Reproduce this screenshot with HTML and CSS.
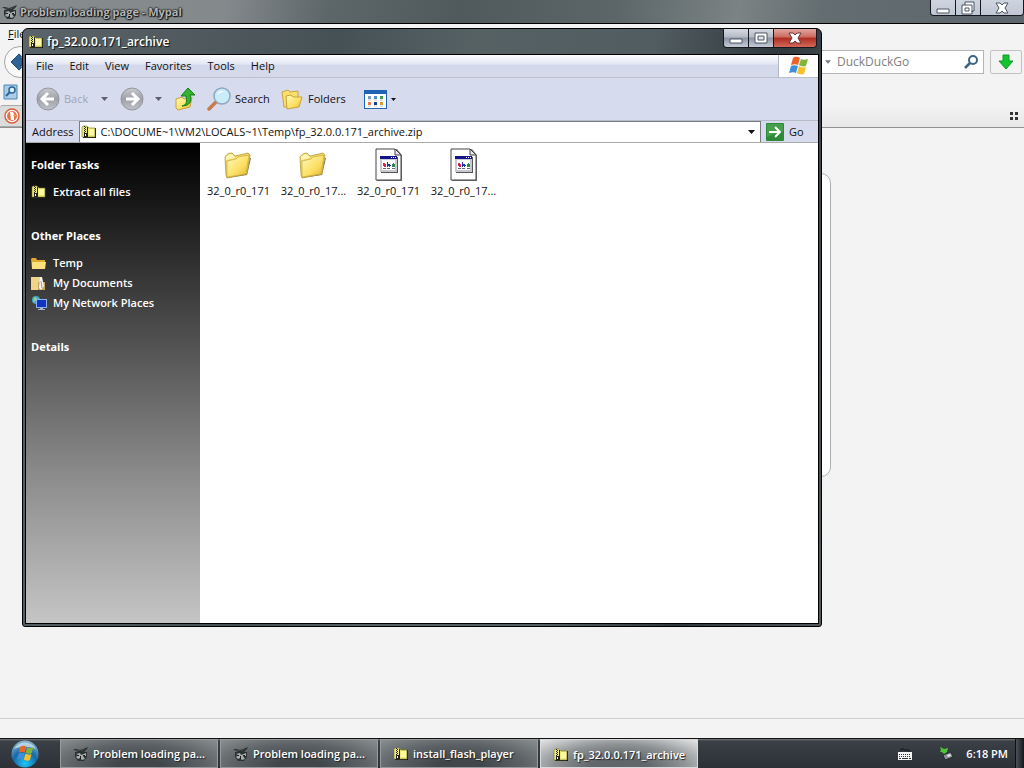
FILE: index.html
```html
<!DOCTYPE html>
<html lang="en">
<head>
    <meta charset="UTF-8">
    <meta name="viewport" content="width=device-width, initial-scale=1.0">
    <title>Desktop</title>
    <link rel="stylesheet" href="styles.css">
</head>
<body>
    <!-- Shared icons -->
    <svg class="sprite" aria-hidden="true">
        <defs>
            <linearGradient id="folder-fill" x1="0" y1="0" x2="1" y2="1">
                <stop offset="0" stop-color="#fffbc0"/>
                <stop offset="0.6" stop-color="#fbdf62"/>
                <stop offset="1" stop-color="#e2b02c"/>
            </linearGradient>
            <linearGradient id="grey-ball" x1="0" y1="0" x2="0" y2="1">
                <stop offset="0" stop-color="#c9cad0"/>
                <stop offset="0.5" stop-color="#9fa1a8"/>
                <stop offset="1" stop-color="#c0c2ca"/>
            </linearGradient>
            <radialGradient id="start-fill" cx="0.5" cy="0.85" r="0.9">
                <stop offset="0" stop-color="#1fc6f5"/>
                <stop offset="0.5" stop-color="#1569a8"/>
                <stop offset="1" stop-color="#9fc4d8"/>
            </radialGradient>
        </defs>
        <symbol id="zip" viewBox="0 0 16 16">
            <path d="M2 14h13V4h-1v9H2z" fill="#111"/>
            <path d="M1 3l1-1h4l2 2h6v9H1z" fill="#eeea78" stroke="#77732c" stroke-width="0.6"/>
            <path d="M8 5h5v6H8z" fill="#fbf9a8"/>
            <path d="M3 2h1v1H3zM4 3h1v1H4zM3 4h1v1H3zM4 5h1v1H4zM3 6h1v1H3zM4 7h1v1H4zM3 8h1v1H3zM3 9h3v4H3zM6 3h1v10H6z" fill="#222"/>
            <path d="M4 10h1v2H4z" fill="#fff"/>
        </symbol>
        <symbol id="mypal" viewBox="0 0 16 16">
            <path d="M0 3l3 0 4 1 3-1 5-2-1 2-3 3 3 0 0 5-3 4H5l-3-4V6l3 0z" fill="#2b3233"/>
            <path d="M3 8l4-1 1 2 5-2v3l-3 0 2 3-3 1-2-2-2 1-2-2 2-2z" fill="#a4afab"/>
            <path d="M4 9h2v1H4zM10 9h2v1h-2zM7 10h1v3H7z" fill="#1d2223"/>
            <path d="M2 4l6 1 4-2-3 2H6z" fill="#78837f"/>
        </symbol>
        <symbol id="flag" viewBox="0 0 20 20">
            <path d="M4 2c3-2 5-1 7 0L9 9C7 8 5 8 2 9z" fill="#e8642a"/>
            <path d="M12 3c2 1 4 1 7 0l-2 7c-3 1-5 0-7-1z" fill="#7fb63a"/>
            <path d="M2 10c2-1 4-1 7 0l-2 7c-2-1-4-1-7 0z" fill="#3f8fd8"/>
            <path d="M10 10c2 1 4 2 7 1l-2 7c-3 1-5 0-7-1z" fill="#f7bf2e"/>
        </symbol>
        <symbol id="folder" viewBox="0 0 32 32">
            <path d="M4 30l20-3 4-17-1 0-4 16-19 3z" fill="#6f6c5c"/>
            <path d="M2 9c2-3 4-4 7-4l3 3 13-3 2 2-3 19-20 4-1-3z" fill="#f3d868" stroke="#b39a3c" stroke-width="0.8"/>
            <path d="M3 9c2-2 4-3 6-3l3 4-9 2z" fill="#fff7b8"/>
            <path d="M4 13l9-2 2-2 11-2-3 19-19 3z" fill="url(#folder-fill)" stroke="#c39c2c" stroke-width="0.6"/>
        </symbol>
        <symbol id="dll" viewBox="0 0 32 34">
            <path d="M4 2h20l5 6v26H4z" fill="#777"/>
            <path d="M3 2h19l6 6v25H3z" fill="#fff" stroke="#444" stroke-width="1"/>
            <path d="M22 2v6h6z" fill="#e8e8e8" stroke="#444" stroke-width="1"/>
            <path d="M8 10h17v16H8z" fill="#555"/>
            <path d="M7 9h17v16H7z" fill="#c9c9d1"/>
            <path d="M7 9h17v3H7z" fill="#12128a"/>
            <path d="M18 10h1v1h-1zM20 10h1v1h-1zM22 10h1v1h-1z" fill="#fff"/>
            <path d="M9 13h13v10H9z" fill="#fff"/>
            <path d="M10 16h2v1h1v3h-2v-1h-1z" fill="#d2274b"/>
            <path d="M14 15h1v2h2v1h1v1h-1v1h-1v-1h-1v1h-1z" fill="#1b35a8"/>
            <path d="M20 16h1v1h1v3h-3v-3h1z" fill="#238a52"/>
            <path d="M10 21h3v1h-3zM14 21h3v1h-3zM19 21h3v1h-3z" fill="#667"/>
        </symbol>
        <symbol id="caret" viewBox="0 0 7 4">
            <path d="M0 0h7L3.500 4z" fill="currentColor"/>
        </symbol>
    </svg>

    <div class="desktop">
        <main class="browser">
            <header class="browser-title">
                <svg class="icon"><use href="#mypal"/></svg>
                <span>Problem loading page - Mypal</span>
                <div class="window-buttons browser-buttons">
                    <button type="button" aria-label="Minimize"><svg viewBox="0 0 14 14"><path d="M1 8h12v4H1z" fill="#fff" stroke="#4c5463"/></svg></button>
                    <button type="button" aria-label="Restore"><svg viewBox="0 0 14 14"><path d="M4 1h9v9h-2v3H1V4h3z" fill="#fff" stroke="#4c5463"/><path d="M4 4h7v7M4 7h4v3H4z" fill="none" stroke="#4c5463"/></svg></button>
                    <button type="button" class="close-button" aria-label="Close"><svg viewBox="0 0 14 14"><path d="M1 2h4l2 2 2-2h4l-3 5 3 5H9l-2-2-2 2H1l3-5z" fill="#fff" stroke="#4c5463"/></svg></button>
                </div>
            </header>

            <div class="browser-menu"><button type="button"><u>F</u>ile</button></div>

            <div class="browser-nav">
                <button type="button" class="round-back" aria-label="Back">
                    <svg viewBox="0 0 20 20"><path d="M9 1l3 3-2 2h8v8h-8l2 2-3 3-9-9z" fill="#2e6396" stroke="#173f6a"/></svg>
                </button>
                <div class="search-box">
                    <svg class="caret"><use href="#caret"/></svg>
                    <input type="text" placeholder="DuckDuckGo" aria-label="Search the web">
                    <svg class="lens" viewBox="0 0 14 14"><circle cx="9" cy="5" r="4" fill="none" stroke="#3d6387" stroke-width="2"/><path d="M6 8l-5 5" stroke="#3d6387" stroke-width="2.500"/></svg>
                </div>
                <button type="button" class="download" aria-label="Downloads">
                    <svg viewBox="0 0 16 16"><path d="M5 1h6v6h4l-7 8-7-8h4z" fill="#13c52c" stroke="#14962a"/></svg>
                </button>
            </div>

            <div class="bookmark-bar">
                <svg class="icon" viewBox="0 0 16 16"><path d="M1 1h13v14H1z" fill="#a9cde9" stroke="#4d86b5"/><circle cx="9" cy="6" r="3" fill="#dff0fb" stroke="#2b6597" stroke-width="1.500"/><path d="M7 8l-4 4" stroke="#2b6597" stroke-width="2"/></svg>
            </div>

            <div class="tab-bar">
                <div class="tab">
                    <svg class="icon" viewBox="0 0 16 16"><circle cx="8" cy="8" r="7" fill="#fff" stroke="#d9603b" stroke-width="1.500"/><circle cx="8" cy="8" r="5" fill="#e5714b"/><path d="M6 4c3-1 4 1 4 3v5H7z" fill="#fff"/><path d="M9 7h3v1H9z" fill="#f6b32c"/></svg>
                </div>
                <svg class="grid-dots" viewBox="0 0 8 8"><path d="M0 0h3v3H0zM5 0h3v3H5zM0 5h3v3H0zM5 5h3v3H5z" fill="#333"/></svg>
            </div>

            <div class="page">
                <div class="error-card"></div>
            </div>
            <div class="status-bar"></div>
        </main>

        <footer class="taskbar">
            <button type="button" class="start" aria-label="Start">
                <svg viewBox="0 0 28 28">
                    <circle cx="14" cy="14" r="13.500" fill="url(#start-fill)"/>
                    <path d="M3 9a12.500 12.500 0 0 1 22 0C18 6 10 6 3 9z" fill="#d7e8ef" opacity="0.7"/>
                    <use href="#flag" x="6" y="5" width="17" height="17"/>
                </svg>
            </button>
            <button type="button" class="task"><svg class="icon"><use href="#mypal"/></svg><span>Problem loading pa...</span></button>
            <button type="button" class="task"><svg class="icon"><use href="#mypal"/></svg><span>Problem loading pa...</span></button>
            <button type="button" class="task"><svg class="icon"><use href="#zip"/></svg><span>install_flash_player</span></button>
            <button type="button" class="task active"><svg class="icon"><use href="#zip"/></svg><span>fp_32.0.0.171_archive</span></button>
            <div class="tray">
                <svg class="icon" viewBox="0 0 16 16"><path d="M4 5V3h3v1h5v2" fill="none" stroke="#15181c"/><path d="M1 6h14v8H1z" fill="#f4f4f4"/><path d="M2 8.500h12M2 10.500h12" stroke="#30353b" stroke-dasharray="1 1"/><path d="M2 12.500h2M5 12.500h6M12 12.500h2" stroke="#30353b"/></svg>
                <svg class="icon" viewBox="0 0 16 16"><path d="M4 9l8-3 2 5-8 3z" fill="#8b9196" stroke="#24292e"/><path d="M8 9l3-1 1 2-3 1z" fill="#e6e9ea"/><path d="M1 1l4 2 4-1-1 4-3 2-2-2H1l1-2z" fill="#4ec53b"/></svg>
                <time>6:18 PM</time>
            </div>
            <button type="button" class="show-desktop" aria-label="Show desktop"></button>
        </footer>

        <section class="explorer">
            <header class="explorer-title">
                <svg class="icon"><use href="#zip"/></svg>
                <h1>fp_32.0.0.171_archive</h1>
                <div class="window-buttons">
                    <button type="button" aria-label="Minimize"><svg viewBox="0 0 14 14"><path d="M1 8h12v4H1z" fill="#fff" stroke="#4c5463"/></svg></button>
                    <button type="button" aria-label="Maximize"><svg viewBox="0 0 14 14"><path d="M1 2h12v10H1z" fill="#fff" stroke="#4c5463"/><path d="M4 5h6v4H4z" fill="#dfe3ea" stroke="#4c5463"/></svg></button>
                    <button type="button" class="close-button" aria-label="Close"><svg viewBox="0 0 14 14"><path d="M1 2h4l2 2 2-2h4l-3 5 3 5H9l-2-2-2 2H1l3-5z" fill="#fff" stroke="#6a3434"/></svg></button>
                </div>
            </header>

            <div class="explorer-body">
                <nav class="menu-bar">
                    <button type="button">File</button>
                    <button type="button">Edit</button>
                    <button type="button">View</button>
                    <button type="button">Favorites</button>
                    <button type="button">Tools</button>
                    <button type="button">Help</button>
                    <div class="throbber"><svg viewBox="0 0 20 20"><use href="#flag"/></svg></div>
                </nav>

                <div class="toolbar">
                    <button type="button" class="tool back" disabled>
                        <svg class="tool-icon" viewBox="0 0 24 24"><circle cx="12" cy="12" r="11" fill="url(#grey-ball)" stroke="#94969e"/><path d="M18 12H7M12 6l-6 6 6 6" fill="none" stroke="#fff" stroke-width="3"/></svg>
                        <span>Back</span>
                        <svg class="caret"><use href="#caret"/></svg>
                    </button>
                    <button type="button" class="tool forward" aria-label="Forward" disabled>
                        <svg class="tool-icon" viewBox="0 0 24 24"><circle cx="12" cy="12" r="11" fill="url(#grey-ball)" stroke="#94969e"/><path d="M6 12h11M12 6l6 6-6 6" fill="none" stroke="#fff" stroke-width="3"/></svg>
                        <svg class="caret"><use href="#caret"/></svg>
                    </button>
                    <button type="button" class="tool up" aria-label="Up">
                        <svg class="tool-icon" viewBox="0 0 24 24"><path d="M2 12l6-2 2 2 8-2-2 10-12 3-2-2z" fill="url(#folder-fill)" stroke="#c8a230"/><path d="M8 19c5-1 5-5 4-10H7l7-8 7 7h-5c2 6 0 11-8 11z" fill="#35b32e" stroke="#177a1b"/></svg>
                    </button>
                    <button type="button" class="tool search">
                        <svg class="tool-icon" viewBox="0 0 24 24"><path d="M9 15l-7 7" stroke="#c87a4a" stroke-width="3.500" stroke-linecap="round"/><circle cx="15" cy="9" r="8" fill="#c9ecfb" stroke="#8fa6bd" stroke-width="1.500"/><path d="M10 8c1-4 5-5 8-3-4 0-6 1-8 3z" fill="#fff"/></svg>
                        <span>Search</span>
                    </button>
                    <button type="button" class="tool folders">
                        <svg class="tool-icon" viewBox="0 0 24 24"><path d="M2 5l6-2 2 2 8-1v15L4 20z" fill="#f9df70" stroke="#caa238"/><path d="M6 9l5-1 2 2h9l-3 10-12 2z" fill="url(#folder-fill)" stroke="#caa238"/></svg>
                        <span>Folders</span>
                    </button>
                    <button type="button" class="tool views" aria-label="Views">
                        <svg class="views-icon" viewBox="0 0 23 19"><path d="M0 0h23v19H0z" fill="#1e63b4"/><path d="M1 4h21v14H1z" fill="#fff"/><path d="M4 6h3v3H4z" fill="#7a9ac0"/><path d="M10 6h3v3h-3z" fill="#4d8fc4"/><path d="M16 6h3v3h-3z" fill="#3f9a4a"/><path d="M4 12h3v3H4z" fill="#df7a55"/><path d="M10 12h3v3h-3z" fill="#153f91"/><path d="M16 12h3v3h-3z" fill="#d0a233"/><path d="M4 10h3M10 10h3M16 10h3M4 16h3M10 16h3M16 16h3" stroke="#c3c8d0"/></svg>
                        <svg class="caret"><use href="#caret"/></svg>
                    </button>
                </div>

                <div class="address-bar">
                    <label for="address">Address</label>
                    <div class="address-field">
                        <svg class="icon"><use href="#zip"/></svg>
                        <input type="text" id="address" value="C:\DOCUME~1\VM2\LOCALS~1\Temp\fp_32.0.0.171_archive.zip">
                        <svg class="caret"><use href="#caret"/></svg>
                    </div>
                    <button type="button" class="go">
                        <svg viewBox="0 0 18 18"><rect width="18" height="18" rx="1" fill="#2d8a36"/><path d="M1 1h16v7L1 14z" fill="#52a655" opacity="0.7"/><path d="M3 9h10M9 4l5 5-5 5" fill="none" stroke="#fff" stroke-width="2"/></svg>
                        <span>Go</span>
                    </button>
                </div>

                <div class="content">
                    <aside class="side">
                        <h2>Folder Tasks</h2>
                        <ul>
                            <li><a href="#"><svg class="icon"><use href="#zip"/></svg>Extract all files</a></li>
                        </ul>
                        <h2>Other Places</h2>
                        <ul>
                            <li><a href="#"><svg class="icon" viewBox="0 0 16 16"><path d="M0 4l1-1h4l1 2h8v9H1z" fill="#e0a92f"/><path d="M1 7h14l-1 7H1z" fill="#fbe07c"/></svg>Temp</a></li>
                            <li><a href="#"><svg class="icon" viewBox="0 0 16 16"><path d="M0 2h10l1 2v11H0z" fill="#f0d489"/><path d="M7 7h7v8H7z" fill="#c9a25a"/><path d="M9 2h2l2 9-3 4-2-2z" fill="#f5f5f5"/><path d="M10 6l1 7" stroke="#999"/></svg>My Documents</a></li>
                            <li><a href="#"><svg class="icon" viewBox="0 0 16 16"><circle cx="5" cy="5" r="4" fill="#3fa7c9"/><path d="M3 2l3 1-1 3-3 1z" fill="#7fd88e"/><path d="M5 4h11v9H5z" fill="#8fb0ea"/><path d="M6 5h9v7H6z" fill="#1133c4"/><path d="M9 13h3v1h2v1H7v-1h2z" fill="#a7b4c9"/></svg>My Network Places</a></li>
                        </ul>
                        <h2>Details</h2>
                    </aside>
                    <div class="files">
                        <figure><svg><use href="#folder"/></svg><figcaption>32_0_r0_171</figcaption></figure>
                        <figure><svg><use href="#folder"/></svg><figcaption>32_0_r0_17...</figcaption></figure>
                        <figure><svg><use href="#dll"/></svg><figcaption>32_0_r0_171</figcaption></figure>
                        <figure><svg><use href="#dll"/></svg><figcaption>32_0_r0_17...</figcaption></figure>
                    </div>
                </div>
            </div>
        </section>
    </div>
</body>
</html>
```
FILE: styles.css
```css
* {
    margin: 0;
    padding: 0;
    box-sizing: border-box;
}

body {
    font-family: "Open Sans", "Noto Sans", sans-serif;
    font-size: 11px;
    line-height: 16px;
    color: #111;
}

button, input {
    font: inherit;
    color: inherit;
    background: none;
    border: none;
}

svg {
    display: block;
    flex-shrink: 0;
}

.sprite {
    position: absolute;
    width: 0;
    height: 0;
}

.icon {
    width: 16px;
    height: 16px;
}

.caret {
    width: 7px;
    height: 4px;
}

.desktop {
    position: relative;
    display: flex;
    flex-direction: column;
    height: 100vh;
    overflow: hidden;
}

/* Browser window */
.browser {
    flex: 1;
    display: flex;
    flex-direction: column;
    background: #f3f3f3;
}

.browser-title {
    display: flex;
    gap: 2px;
    height: 24px;
    padding: 4px 0 0 2px;
    border-bottom: 1px solid #000;
    background: linear-gradient(100deg, #868b8e 0%, #84898c 22%, #5d6669 32%, #50595c 45%, #5c6668 60%, #7b8384 72%, #646d70 80%, #5d666d 100%);
    color: #b2b5b6;
    font-weight: 700;
    text-shadow: 0 0 2px #000, 0 0 2px #000, 1px 1px 1px #222;
}

.window-buttons {
    display: flex;
    height: 19px;
    margin-left: auto;
    border: 1px solid #15191f;
    border-top: none;
    border-radius: 0 0 4px 4px;
    overflow: hidden;
}

.window-buttons button {
    display: flex;
    align-items: center;
    justify-content: center;
    width: 25px;
    background: linear-gradient(#d5d9e1, #b4bac5 45%, #8c94a3 50%, #c5ccd8);
    border-right: 1px solid #15191f;
}

.window-buttons svg {
    width: 14px;
    height: 14px;
}

.window-buttons .close-button {
    width: 42px;
    border-right: none;
    background: linear-gradient(#dfa79f, #cb6a5e 45%, #ae2c1f 50%, #d3685b);
}

.browser-buttons {
    height: 16px;
    margin-top: -4px;
}

.browser-buttons button, .browser-buttons .close-button {
    background: linear-gradient(#cfd5df, #bfc7d4);
}

.browser-menu {
    height: 22px;
    padding: 2px 8px;
}

.browser-nav {
    display: flex;
    align-items: center;
    gap: 6px;
    height: 32px;
    padding: 0 2px 0 4px;
}

.round-back {
    display: flex;
    align-items: center;
    justify-content: center;
    width: 32px;
    height: 32px;
    border: 1px solid #a5a5a5;
    border-radius: 50%;
    background: #fafafa;
}

.round-back svg {
    width: 18px;
    height: 18px;
}

.search-box {
    display: flex;
    align-items: center;
    gap: 6px;
    width: 168px;
    height: 24px;
    margin-left: auto;
    padding: 0 5px 0 8px;
    border: 1px solid #b5b5b5;
    background: #fff;
    color: #777;
}

.search-box .caret {
    width: 6px;
}

.search-box input {
    flex: 1;
    min-width: 0;
    font-size: 12px;
}

.search-box input::placeholder {
    color: #808080;
}

.lens {
    width: 14px;
    height: 14px;
}

.download {
    display: flex;
    align-items: center;
    justify-content: center;
    width: 32px;
    height: 24px;
    border: 1px solid #c2c2c2;
    border-radius: 2px;
}

.download svg {
    width: 16px;
    height: 16px;
}

.bookmark-bar {
    height: 27px;
    padding: 6px 3px;
}

.tab-bar {
    display: flex;
    align-items: center;
    height: 23px;
    padding-right: 6px;
    border-bottom: 1px solid #909090;
    background: linear-gradient(#f3f3f3, #e8e8e8);
}

.tab {
    width: 180px;
    height: 22px;
    padding: 2px 4px;
    border: 1px solid #aaa;
    border-left: none;
    border-radius: 3px 3px 0 0;
    background: #dcdcdc;
}

.grid-dots {
    width: 8px;
    height: 8px;
    margin-left: auto;
}

.page {
    flex: 1;
    padding-top: 45px;
}

.error-card {
    width: 638px;
    height: 304px;
    margin: 0 auto;
    border: 1px solid #b0b0b0;
    border-radius: 10px;
    background: #fff;
}

.status-bar {
    height: 20px;
    border-top: 1px solid #cfcfcf;
}

/* Explorer window */
.explorer {
    position: absolute;
    top: 28px;
    left: 22px;
    width: 800px;
    height: 599px;
    display: flex;
    flex-direction: column;
    padding: 0 2px 2px;
    border: 1px solid #000;
    border-radius: 6px 6px 3px 3px;
    background: linear-gradient(100deg, #5b6468, #465156 35%, #566164 50%, #525d61 70%, #2f383d 84%, #525a5e);
}

.explorer-title {
    display: flex;
    gap: 3px;
    height: 25px;
    padding: 5px 2px 0 3px;
    color: #fff;
    text-shadow: 1px 1px 1px #111;
}

.explorer-title h1 {
    font-size: 12px;
    font-weight: 600;
    line-height: 16px;
}

.explorer-title .window-buttons {
    margin-top: -5px;
}

.explorer-body {
    flex: 1;
    display: flex;
    flex-direction: column;
    min-height: 0;
    border: 1px solid #000;
    background: #d7dbee;
}

.menu-bar {
    display: flex;
    align-items: center;
    gap: 16px;
    height: 23px;
    padding-left: 10px;
    border-bottom: 1px solid #bcc0cc;
    background: linear-gradient(#fdfdff, #e3e7f3 42%, #d3d8ea 45%, #d5daeb);
}

.throbber {
    display: flex;
    align-items: center;
    justify-content: center;
    width: 40px;
    height: 22px;
    margin-left: auto;
    border-left: 1px solid #b3b7c4;
    background: #fff;
}

.throbber svg {
    width: 20px;
    height: 20px;
}

.toolbar {
    display: flex;
    align-items: center;
    height: 43px;
    padding-left: 10px;
    border-bottom: 1px solid #b7bbc8;
}

.tool {
    display: flex;
    align-items: center;
    gap: 4px;
}

.tool-icon {
    width: 24px;
    height: 24px;
}

.back {
    width: 84px;
    color: #a2a5b3;
}

.tool .caret {
    margin-left: auto;
}

.back .caret, .forward .caret {
    margin-right: 12px;
    color: #5d6070;
}

.forward {
    width: 54px;
}

.up {
    width: 33px;
}

.search {
    width: 73px;
}

.folders {
    width: 84px;
}

.views {
    width: 32px;
}

.views-icon {
    width: 23px;
    height: 19px;
}

.views .caret {
    width: 5px;
    height: 3px;
}

.address-bar {
    display: flex;
    gap: 5px;
    height: 22px;
    padding-left: 6px;
    border-bottom: 1px solid #aaa;
}

.address-bar label {
    line-height: 21px;
    font-weight: 500;
}

.address-field {
    flex: 1;
    display: flex;
    align-items: center;
    gap: 4px;
    padding: 0 5px 0 1px;
    border: 1px solid #777c88;
    border-bottom: none;
    background: #fff;
}

.address-field input {
    flex: 1;
    min-width: 0;
}

.go {
    display: flex;
    align-items: center;
    gap: 5px;
    width: 52px;
}

.go svg {
    width: 18px;
    height: 18px;
}

.content {
    flex: 1;
    display: flex;
    min-height: 0;
    background: #fff;
}

.side {
    width: 174px;
    padding: 14px 5px;
    background: linear-gradient(#000, #1e1e1e 16%, #565656 44%, #8d8d8d 70%, #c5c5c5);
    color: #fff;
    font-weight: 600;
}

.side h2 {
    font-size: 11px;
    font-weight: 700;
    line-height: 16px;
}

.side ul {
    list-style: none;
    padding: 9px 0 26px;
}

.side a {
    display: flex;
    gap: 6px;
    align-items: center;
    height: 20px;
    color: inherit;
    text-decoration: none;
}

.files {
    flex: 1;
    display: flex;
    flex-wrap: wrap;
    align-content: flex-start;
    padding: 4px 1px;
}

.files figure {
    display: flex;
    flex-direction: column;
    align-items: center;
    gap: 2px;
    width: 75px;
}

.files svg {
    width: 32px;
    height: 34px;
}

/* Taskbar */
.taskbar {
    display: flex;
    gap: 2px;
    height: 30px;
    border-top: 1px solid #111;
    background: linear-gradient(#777c80, #3a4045 2px, #2c3138);
    color: #fff;
    font-weight: 600;
}

.start {
    width: 58px;
    padding-left: 11px;
    overflow: hidden;
}

.start svg {
    width: 28px;
    height: 28px;
}

.task {
    display: flex;
    align-items: center;
    gap: 4px;
    width: 158px;
    padding-left: 12px;
    border: 1px solid #979b9d;
    background: radial-gradient(ellipse at 50% 100%, #40474b 20%, #5c6265 60%, #8b8f91);
    text-shadow: 1px 1px 1px #222;
}

.task.active {
    border-color: #d8dadb;
    padding-top: 2px;
    background: radial-gradient(ellipse at 50% 100%, #60666a 25%, #8f9395 60%, #e4e5e6);
}

.tray {
    display: flex;
    align-items: center;
    gap: 26px;
    margin-left: auto;
    padding-right: 5px;
}

.tray time {
    margin-left: -15px;
}

.show-desktop {
    width: 9px;
    border-left: 1px solid #0d0f11;
    background: linear-gradient(90deg, #4b5156, #15191d);
}
```
